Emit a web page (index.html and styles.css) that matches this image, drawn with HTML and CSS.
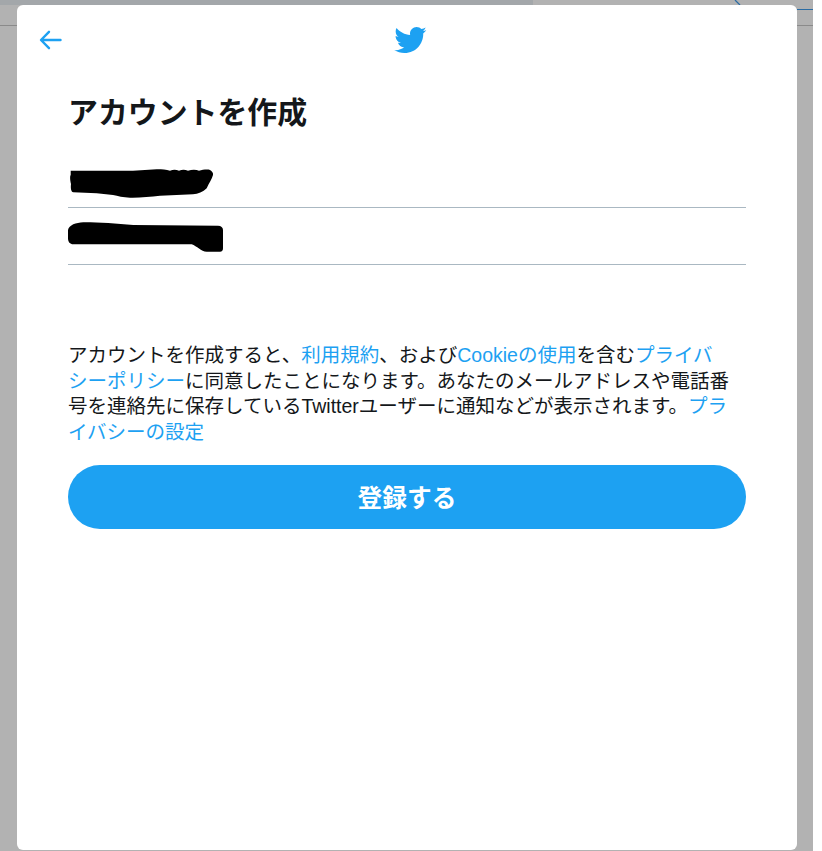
FILE: index.html
```html
<!DOCTYPE html>
<html lang="ja">

<head>
    <meta charset="UTF-8">
    <title>アカウントを作成</title>
    <link rel="stylesheet" href="styles.css">
</head>

<body>
    <div class="backdrop">
        <div class="top-strip"></div>
        <div class="line-gray"></div>
        <div class="line-blue"></div>
        <svg class="slash" width="8" height="6" viewBox="0 0 8 6"><path d="M1 0 L6 5" stroke="#2b6ca3" stroke-width="1.2" fill="none"/></svg>
        <div class="modal">
            <div class="modal-header">
                <svg class="icon-back" width="24" height="24" viewBox="0 0 24 24"><path d="M22.5 12 H3.5 M11 3.8 L3 12 L11 20.2" stroke="#1da1f2" stroke-width="2.4" fill="none" stroke-linecap="round" stroke-linejoin="round"/></svg>
                <svg class="icon-bird" width="34" height="34" viewBox="0 0 24 24"><path fill="#1da1f2" d="M23.643 4.937c-.835.37-1.732.62-2.675.733.962-.576 1.7-1.49 2.048-2.578-.9.534-1.897.922-2.958 1.13-.85-.904-2.06-1.47-3.4-1.47-2.572 0-4.658 2.086-4.658 4.66 0 .364.042.718.12 1.06-3.873-.195-7.304-2.05-9.602-4.868-.4.69-.63 1.49-.63 2.342 0 1.616.823 3.043 2.072 3.878-.764-.025-1.482-.234-2.11-.583v.06c0 2.257 1.605 4.14 3.737 4.568-.392.106-.803.162-1.227.162-.3 0-.593-.028-.877-.082.593 1.85 2.313 3.198 4.352 3.234-1.595 1.25-3.604 1.995-5.786 1.995-.376 0-.747-.022-1.112-.065 2.062 1.323 4.51 2.093 7.14 2.093 8.57 0 13.255-7.098 13.255-13.254 0-.2-.005-.402-.014-.602.91-.658 1.7-1.477 2.323-2.41z"/></svg>
            </div>
            <h1 class="title">アカウントを作成</h1>
            <div class="field field-first">
                <svg class="scribble" width="150" height="30" viewBox="0 0 150 30"><path d="M2.7 2.7 H65 L88.7 1.3 C92 1.2 98 1.5 102 2.7 C105 1.5 108 1.5 111 2.7 C114 1.5 117 1.5 120 2.7 C124 1.5 128 1.5 131 2.7 C135 1.5 140 1.2 142 2 C144 3 145.5 5 145 7 C144 11 141 15 138.7 20.3 C135 24 130 26 125 26.3 L92 27.7 C82 28.5 72 30 62 29.7 C55 29.5 50 28 45 27 L28.7 25.3 L5.3 24.3 C3 24 2.5 20 3 16 C2 12 1.8 8 2.7 7 Z" fill="#000"/></svg>
            </div>
            <div class="field field-second">
                <svg class="scribble" width="158" height="30" viewBox="0 0 158 30"><path d="M0 8 C1 3 8 .6 15.3 .3 C30 .2 48 1.5 65.3 3 L150 3.7 C153 3.8 155 5.5 155 8 V26.3 C155 28.5 154 29.7 152 29.7 H138.7 C133 29.7 129 24 123.7 22.3 H5.3 C2 22.3 0 20 0 16.3 Z" fill="#000"/></svg>
            </div>
            <p class="terms">アカウントを作成すると、<a href="#">利用規約</a>、および<a href="#">Cookieの使用</a>を含む<a href="#">プライバシーポリシー</a>に同意したことになります。あなたのメールアドレスや電話番号を連絡先に保存しているTwitterユーザーに通知などが表示されます。<a href="#">プライバシーの設定</a></p>
            <button class="signup">登録する</button>
        </div>
    </div>
</body>

</html>
```

FILE: styles.css
```css
html, body {
    margin: 0;
    height: 851px;
    background-color: #fff;
    overflow: hidden;
}
.backdrop {
    position: relative;
    box-sizing: border-box;
    width: 813px;
    height: 851px;
    padding: 5px 16px 1px 17px;
    background-color: #b2b2b2;
    font-family: "Liberation Sans", "Noto Sans CJK JP", sans-serif;
}
.top-strip {
    position: absolute;
    left: 0;
    top: 0;
    width: 533px;
    height: 5px;
    background-color: #a3a7aa;
}
.line-gray {
    position: absolute;
    left: 0;
    top: 25px;
    width: 100%;
    height: 1px;
    background-color: #8a8a8a;
}
.line-blue {
    position: absolute;
    right: 0;
    top: 9px;
    width: 16px;
    height: 1px;
    background-color: #2b6ca3;
}
.slash {
    position: absolute;
    left: 734px;
    top: 0;
}
.modal {
    position: relative;
    box-sizing: border-box;
    height: 845px;
    padding: 0 51px;
    background-color: #fff;
    border-radius: 6px;
}
.modal-header {
    position: relative;
    display: flex;
    justify-content: center;
    align-items: center;
    height: 70px;
}
.icon-back {
    position: absolute;
    left: -30px;
    top: 23px;
}
.icon-bird {
    margin-left: 5px;
}
.title {
    margin: 0 0 20px;
    padding-top: 20px;
    font-size: 29.9px;
    line-height: 36px;
    font-weight: 700;
    color: #14171a;
}
.field {
    box-sizing: border-box;
    height: 57px;
    border-bottom: 1px solid #aab8c2;
}
.field-first {
    padding-top: 17px;
}
.field-second {
    padding-top: 14px;
}
.scribble {
    display: block;
}
.terms {
    margin: 0;
    padding: 78px 14px 0 0;
    font-size: 19.5px;
    line-height: 25.6px;
    color: #14171a;
}
.terms a {
    color: #1da1f2;
    text-decoration: none;
}
.signup {
    display: block;
    width: 100%;
    height: 64px;
    margin-top: 20px;
    padding: 0 0 2px;
    border: 0;
    border-radius: 32px;
    background-color: #1da1f2;
    color: #fff;
    font-family: inherit;
    font-size: 24.7px;
    font-weight: 700;
}
```
